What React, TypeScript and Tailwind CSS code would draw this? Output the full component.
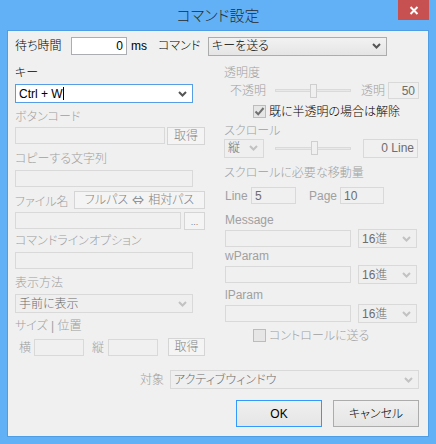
import React from "react";

const F = "font-['Liberation_Sans','Noto_Sans_CJK_JP',sans-serif] [font-feature-settings:'palt'] font-light";

function Chevron({ color }: { color: string }) {
  return (
    <svg width="9" height="6" viewBox="0 0 9 6" className="shrink-0">
      <path d="M1 1 L4.5 4.5 L8 1" stroke={color} strokeWidth="2" fill="none" />
    </svg>
  );
}

function Label({ children, dis = true, cls = "" }: { children: React.ReactNode; dis?: boolean; cls?: string }) {
  return (
    <div className={`h-[14px] leading-[14px] text-[12px] whitespace-nowrap ${dis ? "text-[#a0a0a0]" : "text-black"} ${cls}`}>
      {children}
    </div>
  );
}

function DisInput({ w, h = "h-[17px]", text = "", right = false }: { w: string; h?: string; text?: string; right?: boolean }) {
  return (
    <div
      className={`${w} ${h} shrink-0 border border-[#d9d9d9] bg-[#f0f0f0] flex items-center text-[12px] text-[#6d6d6d] leading-none ${right ? "justify-end pr-[3px]" : "pl-[3px]"}`}
    >
      {text}
    </div>
  );
}

function DisSelect({ w, h = "h-[19px]", text = "" }: { w: string; h?: string; text?: string }) {
  return (
    <div className={`${w} ${h} shrink-0 border border-[#d9d9d9] bg-[#efefef] flex items-center justify-between pl-[3px] pr-[5px] text-[12px] text-[#6d6d6d] leading-none`}>
      <span>{text}</span>
      <Chevron color="#c2c2c2" />
    </div>
  );
}

function DisButton({ w, h = "h-[18px]", children }: { w: string; h?: string; children: React.ReactNode }) {
  return (
    <div className={`${w} ${h} shrink-0 border border-[#d5d5d5] bg-[#f4f4f4] flex items-center justify-center text-[12px] text-[#838383] leading-none whitespace-nowrap`}>
      {children}
    </div>
  );
}

function Slider({ thumb }: { thumb: number }) {
  return (
    <div className="relative w-[76px] h-[16px] shrink-0 flex items-center">
      <div className="w-full h-[3px] border border-[#dadada] bg-[#e9e9e9]" />
      <div className="absolute top-[1px] w-[7px] h-[14px] border border-[#cfcfcf] bg-[#f0f0f0]" style={{ left: thumb }} />
    </div>
  );
}

function Check({ checked }: { checked: boolean }) {
  return (
    <div className="w-[13px] h-[13px] shrink-0 border border-[#bcbcbc] bg-[#e6e6e6] flex items-center justify-center">
      {checked && (
        <svg width="11" height="11" viewBox="0 0 11 11">
          <path d="M1.5 5.5 L4.2 8.3 L9.5 2" stroke="#707070" strokeWidth="2" fill="none" />
        </svg>
      )}
    </div>
  );
}

export default function App() {
  return (
    <div className={`${F} w-[436px] h-[444px] bg-[#62b0f6] flex flex-col overflow-hidden`}>
      {/* title bar */}
      <div className="relative h-[30px] shrink-0 flex items-center justify-center">
        <span className="text-[15px] text-[#2b2b2b] leading-none mt-[1px]">コマンド設定</span>
        <div className="absolute right-[7px] top-0 w-[31px] h-[20px] bg-[#c75050] flex items-center justify-center">
          <svg width="10" height="9" viewBox="0 0 10 9">
            <path d="M1.5 1 L8.5 8 M8.5 1 L1.5 8" stroke="white" strokeWidth="2" />
          </svg>
        </div>
      </div>

      {/* client */}
      <div className="ml-[7px] w-[422px] h-[407px] shrink-0 border border-[#4f9de4] bg-[#f0f0f0] flex flex-col text-[12px]">
        {/* row 1 */}
        <div className="mt-[6px] h-[18px] pl-[7px] flex items-center">
          <div className="w-[56px] text-black leading-none">待ち時間</div>
          <div className="w-[56px] h-[18px] border border-[#abadb3] bg-white flex items-center justify-end pr-[3px] text-black leading-none">0</div>
          <div className="w-[31px] pl-[4px] text-black leading-none">ms</div>
          <div className="w-[50px] text-black leading-none">コマンド</div>
          <div className="w-[179px] h-[19px] border border-[#acacac] bg-gradient-to-b from-[#f2f2f2] to-[#e5e5e5] flex items-center justify-between pl-[3px] pr-[5px] text-black leading-none">
            <span>キーを送る</span>
            <Chevron color="#555555" />
          </div>
        </div>

        {/* columns */}
        <div className="h-[302px] flex items-start">
          {/* left column */}
          <div className="ml-[7px] w-[190px] flex flex-col">
            <Label dis={false} cls="mt-[11px]">キー</Label>
            <div className="mt-[4px] w-[178px] h-[19px] border border-[#569de5] bg-white flex items-center justify-between pl-[3px] pr-[5px] text-black leading-none">
              <span className="flex items-center">
                Ctrl + W<span className="inline-block w-[1px] h-[13px] bg-black" />
              </span>
              <Chevron color="#555555" />
            </div>
            <Label cls="mt-[7px]">ボタンコード</Label>
            <div className="mt-[3px] h-[18px] flex items-start">
              <DisInput w="w-[150px]" />
              <div className="ml-[2px]">
                <DisButton w="w-[38px]">取得</DisButton>
              </div>
            </div>
            <Label cls="mt-[7px]">コピーする文字列</Label>
            <div className="mt-[4px]">
              <DisInput w="w-[178px]" />
            </div>
            <div className="mt-[4px] h-[18px] flex items-center justify-between">
              <Label cls="mt-[4px]">ファイル名</Label>
              <DisButton w="w-[131px]">
                フルパス<span className="mx-[4px] font-['Noto_Sans_CJK_JP',sans-serif] font-normal text-[12px]">⇔</span>相対パス
              </DisButton>
            </div>
            <div className="mt-[3px] h-[18px] flex items-start">
              <DisInput w="w-[166px]" />
              <div className="ml-[3px]">
                <DisButton w="w-[21px]">
                  <span className="text-[9px] mt-[3px]">...</span>
                </DisButton>
              </div>
            </div>
            <Label cls="mt-[4px]">コマンドラインオプション</Label>
            <div className="mt-[4px]">
              <DisInput w="w-[178px]" />
            </div>
            <Label cls="mt-[7px]">表示方法</Label>
            <div className="mt-[4px]">
              <DisSelect w="w-[178px]" text="手前に表示" />
            </div>
            <Label cls="mt-[6px]">サイズ | 位置</Label>
            <div className="mt-[5px] h-[19px] flex items-center">
              <div className="pl-[4px] w-[19px] text-[#a0a0a0] leading-none">横</div>
              <DisInput w="w-[50px]" />
              <div className="ml-[8px] w-[16px] text-[#a0a0a0] leading-none">縦</div>
              <DisInput w="w-[50px]" />
              <div className="ml-[10px] self-start">
                <DisButton w="w-[37px]">取得</DisButton>
              </div>
            </div>
          </div>

          {/* right column */}
          <div className="ml-[19px] w-[195px] flex flex-col">
            <Label cls="mt-[11px]">透明度</Label>
            <div className="mt-[2px] h-[17px] flex items-center">
              <div className="pl-[6px] w-[51px] text-[#a0a0a0] leading-none">不透明</div>
              <Slider thumb={35} />
              <div className="ml-[10px] w-[27px] text-[#a0a0a0] leading-none">透明</div>
              <DisInput w="w-[31px]" text="50" right />
            </div>
            <div className="mt-[6px] h-[13px] pl-[29px] flex items-center">
              <Check checked />
              <span className="ml-[3px] text-black leading-none">既に半透明の場合は解除</span>
            </div>
            <Label cls="mt-[6px]">スクロール</Label>
            <div className="h-[20px] flex items-center">
              <DisSelect w="w-[40px]" h="h-[19px]" text="縦" />
              <div className="ml-[11px]">
                <Slider thumb={36} />
              </div>
              <div className="ml-[12px]">
                <DisInput w="w-[55px]" h="h-[19px]" text="0 Line" right />
              </div>
            </div>
            <Label cls="mt-[8px]">スクロールに必要な移動量</Label>
            <div className="mt-[7px] h-[17px] flex items-center">
              <div className="pl-[1px] w-[27px] text-[#a0a0a0] leading-none">Line</div>
              <DisInput w="w-[45px]" text="5" />
              <div className="ml-[13px] w-[31px] text-[#a0a0a0] leading-none">Page</div>
              <DisInput w="w-[44px]" text="10" />
            </div>
            <Label cls="mt-[9px] pl-[1px]">Message</Label>
            <div className="mt-[2px] h-[19px] pl-[1px] flex items-center">
              <DisInput w="w-[126px]" />
              <div className="ml-[7px]">
                <DisSelect w="w-[59px]" text="16進" />
              </div>
            </div>
            <Label cls="mt-[1px] pl-[1px]">wParam</Label>
            <div className="mt-[2px] h-[19px] pl-[1px] flex items-center">
              <DisInput w="w-[126px]" />
              <div className="ml-[7px]">
                <DisSelect w="w-[59px]" text="16進" />
              </div>
            </div>
            <Label cls="mt-[4px] pl-[1px]">lParam</Label>
            <div className="mt-[2px] h-[19px] pl-[1px] flex items-center">
              <DisInput w="w-[126px]" />
              <div className="ml-[7px]">
                <DisSelect w="w-[59px]" text="16進" />
              </div>
            </div>
            <div className="mt-[6px] h-[13px] pl-[29px] flex items-center">
              <Check checked={false} />
              <span className="ml-[3px] text-[#a0a0a0] leading-none">コントロールに送る</span>
            </div>
          </div>
        </div>

        {/* bottom */}
        <div className="mt-[13px] h-[19px] pr-[9px] flex items-center justify-end">
          <div className="text-[#a0a0a0] leading-none">対象</div>
          <div className="ml-[6px]">
            <DisSelect w="w-[249px]" text="アクティブウィンドウ" />
          </div>
        </div>
        <div className="mt-[11px] pr-[9px] flex justify-end gap-[11px]">
          <div className="w-[86px] h-[27px] border border-[#3399ff] bg-gradient-to-b from-[#f0f0f0] to-[#e5e5e5] flex items-center justify-center text-black leading-none">OK</div>
          <div className="w-[86px] h-[27px] border border-[#acacac] bg-gradient-to-b from-[#f0f0f0] to-[#e5e5e5] flex items-center justify-center text-black leading-none">キャンセル</div>
        </div>
      </div>
    </div>
  );
}
